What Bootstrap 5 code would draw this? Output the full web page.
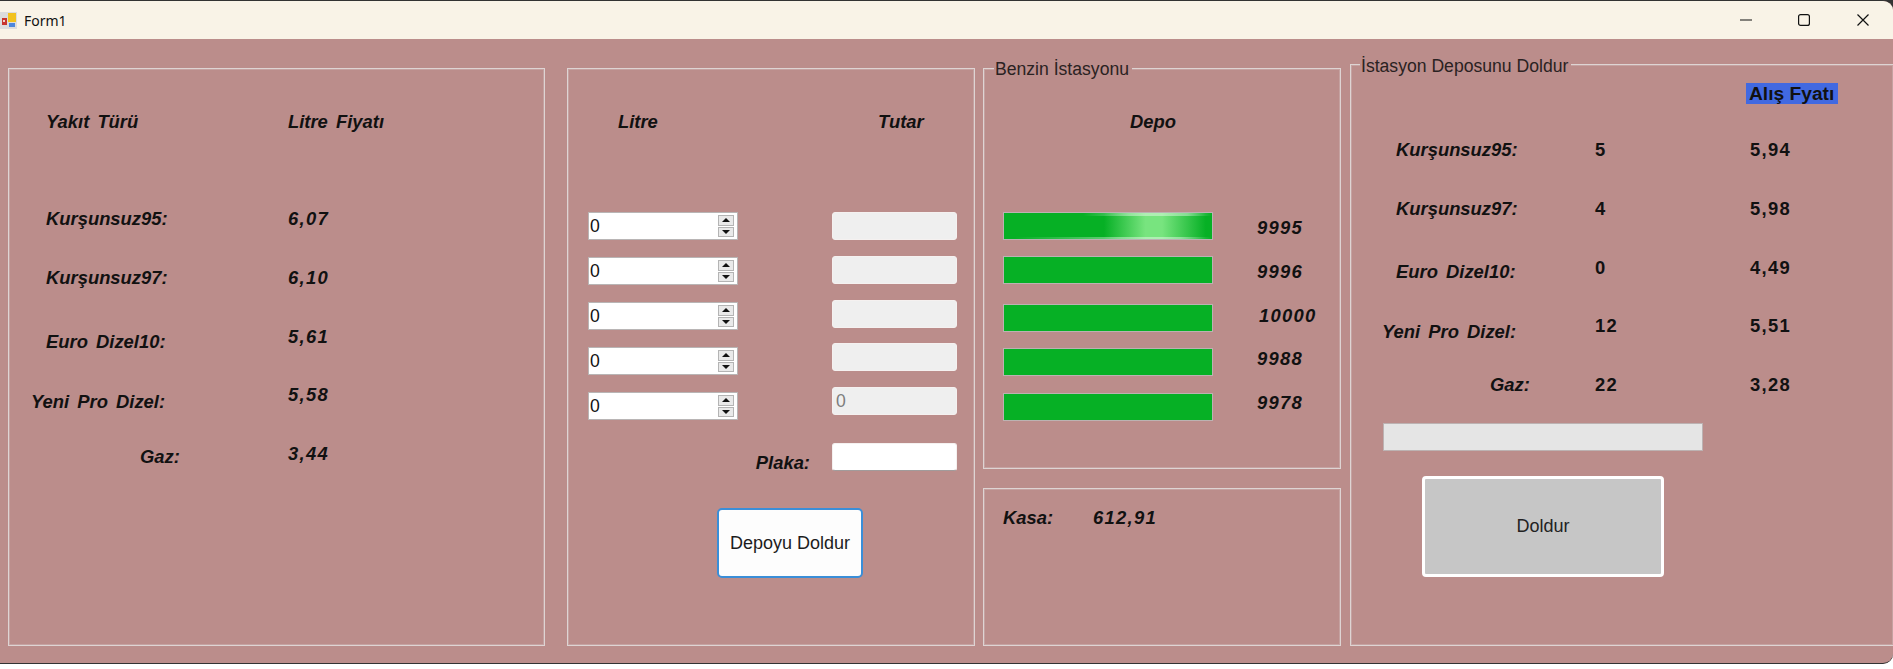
<!DOCTYPE html>
<html lang="tr">
<head>
    <meta charset="UTF-8">
    <title>Form1</title>
    <link href="https://cdn.jsdelivr.net/npm/bootstrap@5.3.0/dist/css/bootstrap.min.css" rel="stylesheet">
    <style>
        html, body { height: 100%; }
        body {
            overflow: hidden;
            font-family: "Liberation Sans", Arial, sans-serif;
            color: #111;
            background: linear-gradient(#333 0 20px, #fff 20px);
        }
        .app-window {
            height: 664px;
            border-top: 1px solid #333;
            border-bottom: 1px solid #333;
            border-radius: 0 10px 10px 0;
            overflow: hidden;
            background: #bb8d8b;
        }
        .title-strip {
            height: 38px;
            background: #f9f3e7;
        }
        .title-text {
            font-family: "Noto Sans", sans-serif;
            font-size: 14px;
            margin-left: 7px;
        }
        .title-ctrl { width: 12px; height: 12px; }
        .ctrl-min { margin-right: 46px; }
        .ctrl-max { margin-right: 47px; }
        .ctrl-close { margin-right: 24px; }

        .form-surface { height: 624px; padding-left: 8px; }
        .frame {
            position: relative;
            border: 1px solid #ded4d3;
            box-shadow: inset 0 0 0 1px rgba(222, 212, 211, .3);
        }
        .frame-fuel { width: 537px; height: 578px; margin-top: 29px; }
        .frame-entry { width: 408px; height: 578px; margin-top: 29px; margin-left: 22px; }
        .frame-stack { width: 358px; height: 578px; margin-top: 29px; margin-left: 8px; }
        .frame-depo { height: 401px; }
        .frame-kasa { height: 158px; margin-top: 19px; padding: 19px 0 0 19px; }
        .frame-refill { width: 543px; height: 582px; margin-top: 25px; margin-left: 9px; border-right: 0; }
        .frame-title {
            position: absolute;
            left: 10px;
            padding: 0 3px 0 1px;
            font-size: 17.6px;
            line-height: 20px;
            color: #2a2222;
            background: #bb8d8b;
        }
        .frame-depo .frame-title { top: -10px; }
        .frame-refill .frame-title { top: -9px; left: 9px; }

        .tag { font-weight: 700; font-style: italic; font-size: 18.4px; line-height: 20px; white-space: nowrap; word-spacing: 3px; }
        .num-wide { letter-spacing: 1.3px; }
        .plain-num { font-weight: 700; font-size: 18.4px; line-height: 20px; letter-spacing: 1.3px; }

        .fuel-head { padding: 43px 0 0 37px; }
        .fuel-head-name { width: 242px; }
        .fuel-rows { margin-top: 77px; gap: 38.75px; }
        .fuel-row { height: 20px; }
        .fuel-cell { width: 279px; }
        .name-a { margin-left: 37px; }
        .name-b { margin-left: 22px; }
        .name-c { margin-left: 131px; }
        .drop-3 { margin-top: 3px; }
        .drop-4 { margin-top: 4px; }
        .drop-5 { margin-top: 5px; }
        .drop-6 { margin-top: 6px; }
        .drop-7 { margin-top: 7px; }

        .entry-head { padding: 43px 0 0 50px; }
        .entry-head-litre { width: 260px; }
        .entry-cols { margin-top: 80px; }
        .spin-col { width: 150px; margin-left: 20px; margin-right: 94px; gap: 17px; }
        .spin-box {
            height: 28px;
            padding: 2px 3px 2px 0;
            background: #fff;
            border: 1px solid #b9b5b5;
        }
        .spin-input.form-control {
            padding: 0 0 0 1px;
            border: 0;
            border-radius: 0;
            box-shadow: none;
            font-size: 17.6px;
            color: #111;
        }
        .spin-btns { width: 18px; gap: 1px; }
        .spin-step {
            flex: 1;
            padding: 0;
            background: #e9e9e9;
            border: 1px solid #b4b4b4;
            border-radius: 0;
        }
        .spin-step::after {
            content: "";
            display: block;
            width: 0;
            margin: 0 auto;
            border-left: 4px solid transparent;
            border-right: 4px solid transparent;
        }
        .spin-up::after { border-bottom: 4px solid #111; }
        .spin-down::after { border-top: 4px solid #111; }

        .sum-col { width: 125px; gap: 15.75px; }
        .sum-box.form-control {
            height: 28px;
            min-height: 0;
            padding: 0 0 0 3px;
            font-size: 17.6px;
            color: #7d7d7d;
            background: #efefef;
            border: 1px solid #f5f1f0;
            border-radius: 3px;
            opacity: 1;
        }
        .plate-row { margin-top: 23px; }
        .plate-name { margin: 10px 22px 0 0; }
        .plate-box.form-control {
            width: 125px;
            height: 28px;
            padding: 0 3px;
            background: #fff;
            border: 1px solid #f5f1f0;
            border-bottom-color: #a19b9b;
            border-radius: 3px;
            margin-right: 17px;
        }
        .btn.fill-btn {
            display: block;
            width: 146px;
            height: 70px;
            margin: 35px 0 0 149px;
            padding: 0;
            font-size: 18px;
            color: #1c1c1c;
            background: #fdfdfd;
            border: 2px solid #3a8ed8;
            border-radius: 5px;
        }

        .depo-head { padding: 43px 0 0 146px; }
        .depo-cols { margin: 80px 0 0 19px; }
        .tank-col { width: 210px; margin-right: 44px; }
        .tank-bar.progress {
            height: 28px;
            background: #e6e6e6;
            border: 1px solid #bcb2b2;
            border-radius: 0;
        }
        .tank-bar .progress-bar { background-color: #06b025; }
        .tank-bar .bar-shine {
            background:
                linear-gradient(90deg, transparent 38%, rgba(255, 255, 255, .4) 60%, rgba(255, 255, 255, .4) 88%, transparent) top / 100% 3px no-repeat,
                linear-gradient(90deg, transparent 5%, rgba(255, 255, 255, .4) 55%, rgba(255, 255, 255, .4) 85%, transparent) bottom / 100% 2px no-repeat,
                linear-gradient(90deg, #06b025 48%, #78e47f 68%, #78e47f 76%, #06b025 97%);
        }
        .tank-gap-a { margin-top: 16px; }
        .tank-gap-b { margin-top: 20px; }
        .tank-gap-c { margin-top: 17px; }
        .level-col { margin-top: 6px; gap: 23.75px; }
        .level-shift { margin-left: 2px; }
        .kasa-name { width: 90px; }

        .buy-head { margin: 18px 0 0 395px; }
        .buy-tag {
            display: block;
            width: 92px;
            height: 21px;
            padding-left: 3px;
            font-size: 19.2px;
            line-height: 21px;
            font-weight: 700;
            background: #4169e1;
            white-space: nowrap;
        }
        .buy-rows { margin-top: 36px; gap: 38.75px; }
        .buy-cell { width: 244px; }
        .buy-qty { width: 155px; }
        .name-d { margin-left: 45px; }
        .name-e { margin-left: 31px; }
        .name-f { margin-left: 139px; }
        .refill-progress.progress {
            width: 320px;
            height: 28px;
            margin: 28px 0 0 32px;
            background: #e5e5e5;
            border: 1px solid #bcb2b2;
            border-radius: 0;
        }
        .btn.refill-btn {
            display: block;
            width: 242px;
            height: 101px;
            margin: 25px 0 0 71px;
            padding: 0;
            font-size: 18px;
            color: #222;
            background: #c6c6c6;
            border: 3px solid #fff;
            border-radius: 4px;
        }
    </style>
</head>
<body>
    <div class="app-window">
        <div class="title-strip d-flex align-items-center">
            <svg width="17" height="17" viewBox="0 0 17 17" class="flex-shrink-0">
                <rect x="0" y="0" width="17" height="17" fill="#dcdcdc"/>
                <rect x="2" y="6" width="5" height="7" fill="#c8342e"/>
                <rect x="3" y="8" width="2" height="2" fill="#f0d0c8"/>
                <rect x="8" y="1" width="8" height="9" fill="#f2c21e"/>
                <rect x="9" y="11" width="6" height="4" fill="#4d86dc"/>
            </svg>
            <span class="title-text flex-grow-1">Form1</span>
            <svg class="title-ctrl ctrl-min" viewBox="0 0 12 12"><path d="M0 6h12" stroke="#111" stroke-width="1.2" fill="none"/></svg>
            <svg class="title-ctrl ctrl-max" viewBox="0 0 12 12"><rect x=".6" y=".6" width="10.8" height="10.8" rx="2" stroke="#111" stroke-width="1.2" fill="none"/></svg>
            <svg class="title-ctrl ctrl-close" viewBox="0 0 12 12"><path d="M.5.5l11 11M11.5.5l-11 11" stroke="#111" stroke-width="1.2" fill="none"/></svg>
        </div>

        <div class="form-surface d-flex align-items-start">
            <!-- yakit fiyatlari -->
            <div class="frame frame-fuel flex-shrink-0">
                <div class="fuel-head d-flex">
                    <span class="tag fuel-head-name">Yakıt Türü</span>
                    <span class="tag">Litre Fiyatı</span>
                </div>
                <div class="fuel-rows d-flex flex-column">
                    <div class="fuel-row d-flex align-items-start"><div class="fuel-cell"><div class="tag name-a">Kurşunsuz95:</div></div><span class="tag num-wide">6,07</span></div>
                    <div class="fuel-row d-flex align-items-start"><div class="fuel-cell"><div class="tag name-a">Kurşunsuz97:</div></div><span class="tag num-wide">6,10</span></div>
                    <div class="fuel-row d-flex align-items-start"><div class="fuel-cell drop-5"><div class="tag name-a">Euro Dizel10:</div></div><span class="tag num-wide">5,61</span></div>
                    <div class="fuel-row d-flex align-items-start"><div class="fuel-cell drop-7"><div class="tag name-b">Yeni Pro Dizel:</div></div><span class="tag num-wide">5,58</span></div>
                    <div class="fuel-row d-flex align-items-start"><div class="fuel-cell drop-3"><div class="tag name-c">Gaz:</div></div><span class="tag num-wide">3,44</span></div>
                </div>
            </div>

            <!-- litre / tutar -->
            <div class="frame frame-entry flex-shrink-0">
                <div class="entry-head d-flex">
                    <span class="tag entry-head-litre">Litre</span>
                    <span class="tag">Tutar</span>
                </div>
                <div class="entry-cols d-flex align-items-start">
                    <div class="spin-col d-flex flex-column">
                        <div class="spin-box d-flex"><input class="spin-input form-control" value="0"><div class="spin-btns d-flex flex-column"><button class="spin-step spin-up" type="button"></button><button class="spin-step spin-down" type="button"></button></div></div>
                        <div class="spin-box d-flex"><input class="spin-input form-control" value="0"><div class="spin-btns d-flex flex-column"><button class="spin-step spin-up" type="button"></button><button class="spin-step spin-down" type="button"></button></div></div>
                        <div class="spin-box d-flex"><input class="spin-input form-control" value="0"><div class="spin-btns d-flex flex-column"><button class="spin-step spin-up" type="button"></button><button class="spin-step spin-down" type="button"></button></div></div>
                        <div class="spin-box d-flex"><input class="spin-input form-control" value="0"><div class="spin-btns d-flex flex-column"><button class="spin-step spin-up" type="button"></button><button class="spin-step spin-down" type="button"></button></div></div>
                        <div class="spin-box d-flex"><input class="spin-input form-control" value="0"><div class="spin-btns d-flex flex-column"><button class="spin-step spin-up" type="button"></button><button class="spin-step spin-down" type="button"></button></div></div>
                    </div>
                    <div class="sum-col d-flex flex-column">
                        <input class="sum-box form-control" disabled>
                        <input class="sum-box form-control" disabled>
                        <input class="sum-box form-control" disabled>
                        <input class="sum-box form-control" disabled>
                        <input class="sum-box form-control" value="0" disabled>
                    </div>
                </div>
                <div class="plate-row d-flex justify-content-end align-items-start">
                    <span class="tag plate-name">Plaka:</span>
                    <input class="plate-box form-control">
                </div>
                <button class="btn fill-btn" type="button">Depoyu Doldur</button>
            </div>

            <!-- istasyon + kasa -->
            <div class="frame-stack flex-shrink-0">
                <div class="frame frame-depo">
                    <span class="frame-title">Benzin İstasyonu</span>
                    <div class="depo-head d-flex"><span class="tag">Depo</span></div>
                    <div class="depo-cols d-flex align-items-start">
                        <div class="tank-col">
                            <div class="tank-bar progress"><div class="progress-bar bar-shine" style="width: 100%"></div></div>
                            <div class="tank-bar progress tank-gap-a"><div class="progress-bar" style="width: 100%"></div></div>
                            <div class="tank-bar progress tank-gap-b"><div class="progress-bar" style="width: 100%"></div></div>
                            <div class="tank-bar progress tank-gap-a"><div class="progress-bar" style="width: 100%"></div></div>
                            <div class="tank-bar progress tank-gap-c"><div class="progress-bar" style="width: 100%"></div></div>
                        </div>
                        <div class="level-col d-flex flex-column">
                            <span class="tag num-wide">9995</span>
                            <span class="tag num-wide">9996</span>
                            <span class="tag num-wide level-shift">10000</span>
                            <span class="tag num-wide">9988</span>
                            <span class="tag num-wide">9978</span>
                        </div>
                    </div>
                </div>
                <div class="frame frame-kasa d-flex align-items-start">
                    <span class="tag kasa-name">Kasa:</span>
                    <span class="tag num-wide">612,91</span>
                </div>
            </div>

            <!-- istasyon deposu -->
            <div class="frame frame-refill flex-shrink-0">
                <span class="frame-title">İstasyon Deposunu Doldur</span>
                <div class="buy-head"><span class="buy-tag">Alış Fyatı</span></div>
                <div class="buy-rows d-flex flex-column">
                    <div class="fuel-row d-flex align-items-start"><div class="buy-cell"><div class="tag name-d">Kurşunsuz95:</div></div><span class="plain-num buy-qty">5</span><span class="plain-num">5,94</span></div>
                    <div class="fuel-row d-flex align-items-start"><div class="buy-cell"><div class="tag name-d">Kurşunsuz97:</div></div><span class="plain-num buy-qty">4</span><span class="plain-num">5,98</span></div>
                    <div class="fuel-row d-flex align-items-start"><div class="buy-cell drop-4"><div class="tag name-d">Euro Dizel10:</div></div><span class="plain-num buy-qty">0</span><span class="plain-num">4,49</span></div>
                    <div class="fuel-row d-flex align-items-start"><div class="buy-cell drop-6"><div class="tag name-e">Yeni Pro Dizel:</div></div><span class="plain-num buy-qty">12</span><span class="plain-num">5,51</span></div>
                    <div class="fuel-row d-flex align-items-start"><div class="buy-cell"><div class="tag name-f">Gaz:</div></div><span class="plain-num buy-qty">22</span><span class="plain-num">3,28</span></div>
                </div>
                <div class="refill-progress progress"></div>
                <button class="btn refill-btn" type="button">Doldur</button>
            </div>
        </div>
    </div>
    <script src="https://cdn.jsdelivr.net/npm/bootstrap@5.3.0/dist/js/bootstrap.bundle.min.js"></script>
</body>
</html>
